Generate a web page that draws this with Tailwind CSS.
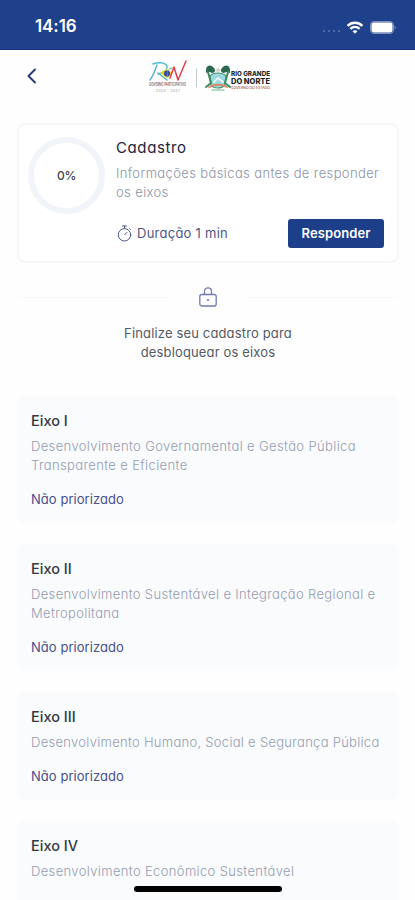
<!DOCTYPE html>
<html lang="pt-BR">
<head>
    <meta charset="UTF-8">
    <meta name="viewport" content="width=device-width, initial-scale=1.0">
    <title>Cadastro</title>
    <script src="https://cdn.jsdelivr.net/npm/@tailwindcss/browser@4"></script>
</head>
<body class="bg-white">
    <div class="relative h-[900px] w-[415px] overflow-hidden bg-[#fefefe] font-['Inter',sans-serif] [font-feature-settings:'cv11','cv08'_0,'calt'_0] whitespace-nowrap">
        <!-- Status bar -->
        <header class="flex h-[50px] items-center justify-between border-b border-[#17317b] bg-[#1f408b] pt-[5px] pr-[19px] pl-[35px] text-white">
            <span class="text-[17px] font-semibold tracking-[-0.1px]">14:16</span>
            <div class="flex items-center">
                <div class="mt-2 mr-[6px] flex gap-[3px]">
                    <span class="size-[2px] rounded-full bg-[#5f78b4]"></span>
                    <span class="size-[2px] rounded-full bg-[#5f78b4]"></span>
                    <span class="size-[2px] rounded-full bg-[#5f78b4]"></span>
                    <span class="size-[2px] rounded-full bg-[#5f78b4]"></span>
                </div>
                <svg class="mr-[6px] h-[13px] w-[18px]" viewBox="0 0 18 14" fill="none" stroke="white" stroke-width="2.6">
                    <path d="M1 5.2C5.6 .8 12.4 .8 17 5.2" />
                    <path d="M4 8.4c3-2.8 7-2.8 10 0" />
                    <path d="M9 13.6 6.3 10.9c1.6-1.3 3.8-1.3 5.4 0z" fill="white" stroke="none" />
                </svg>
                <svg class="h-[13px] w-[26px]" viewBox="0 0 26 13">
                    <rect x=".6" y=".6" width="22.8" height="11.8" rx="3.6" fill="none" stroke="#7e91c1" stroke-width="1.2" />
                    <rect x="1.5" y="1.5" width="21" height="10" rx="2.4" fill="white" />
                    <path d="M24.6 4.4c1.5.7 1.5 3.5 0 4.2z" fill="#7e91c1" />
                </svg>
            </div>
        </header>

        <!-- Navigation -->
        <nav class="grid h-[73px] grid-cols-[148px_auto] items-start">
            <svg class="mt-[18px] ml-[27px] h-4 w-[10px]" viewBox="0 0 10 16" fill="none" stroke="#27377f" stroke-width="1.9" stroke-linecap="round" stroke-linejoin="round">
                <path d="M8 1.5 1.5 8 8 14.5" />
            </svg>
            <div class="mt-[9px] flex">
                <svg class="h-[36px] w-[124px]" viewBox="0 0 124 36" fill="none" stroke-linecap="round">
                    <path d="M5 5c5-2 12-2 14 2 1 4-4 7-9 8" stroke="#4cbcd9" stroke-width="1.4" />
                    <path d="M9 6C7 12 5 17 2 21" stroke="#5aaed4" stroke-width="1.4" />
                    <path d="m10 14 9 7" stroke="#50b6bd" stroke-width="1.4" />
                    <path d="m12 14 6-4 7 4-6 5z" fill="#e9cf33" />
                    <circle cx="19" cy="14.5" r="3" fill="#31479a" />
                    <path d="m22 19 4-11 4 13 8-19" stroke="#e73d4c" stroke-width="1.5" stroke-linejoin="round" />
                    <path d="M20 18c-2-5 0-8 4-9" stroke="#49a36a" />
                    <path d="M48.5 10v18" stroke="#c9cbd0" stroke-width="1" />
                    <path d="M62 17c3-4 12-4 16 0l-1 9c-4 4-11 4-14 0z" fill="#9ed8df" stroke="#4f916e" stroke-width="1.2" />
                    <path d="M58 11c0-5 5-6 8-2 2 2 1 5-2 5-3-2-5 0-6 0zM82 11c0-5-5-6-8-2-2 2-1 5 2 5 3-2 5 0 6 0z" fill="#2d6952" />
                    <path d="m60 13 3 11-5 4m22-15-3 11 5 4" stroke="#3c8c61" stroke-width="2" />
                    <path d="m70 8 1 2 2 .2-1.5 1.4.5 2.2-2-1.2-2 1.2.5-2.2-1.5-1.4 2-.2z" fill="#c9d7c3" />
                    <path d="m66 23 4-4 5 4" stroke="#fff" stroke-width="1.5" />
                    <path d="M61 28c6-3 12-3 18 0" stroke="#dc8767" stroke-width="1.8" />
                    <path d="M64 31h12" stroke="#6ab985" stroke-width="1.2" />
                    <text x="1" y="27" textLength="37" lengthAdjust="spacingAndGlyphs" font-size="4.5" font-weight="600" fill="#85645f">GOVERNO PARTICIPATIVO</text>
                    <text x="8" y="32.5" textLength="24" font-size="3.5" fill="#9b9ba1">2024 - 2027</text>
                    <text x="83" y="16.5" textLength="39" lengthAdjust="spacingAndGlyphs" font-size="6.5" font-weight="800" fill="#262626">RIO GRANDE</text>
                    <text x="83" y="25" textLength="39" lengthAdjust="spacingAndGlyphs" font-size="7.5" font-weight="800" fill="#202020">DO NORTE</text>
                    <text x="83" y="29.5" textLength="39" lengthAdjust="spacingAndGlyphs" font-size="3" font-weight="600" fill="#b06857">GOVERNO DO ESTADO</text>
                </svg>
            </div>
        </nav>

        <main class="pr-4 pl-[17px]">
            <!-- Cadastro -->
            <section class="flex h-[140px] rounded-lg border-2 border-[#f5f7f9] bg-white pt-[12px] pr-[13px] pl-[9px]">
                <div class="flex size-[77px] shrink-0 items-center justify-center rounded-full border-[6px] border-[#f1f5f9]">
                    <span class="text-[12px] font-medium tracking-[-0.3px] text-[#42444b]">0%</span>
                </div>
                <div class="ml-[11px] flex-1">
                    <h1 class="text-[15px] leading-[22px] tracking-[0.6px] text-[#20233c]">Cadastro</h1>
                    <p class="mt-[5px] text-[13px] leading-[19px] font-light tracking-[0.38px] text-[#8d93a5]">Informações básicas antes de responder<br>os eixos</p>
                    <div class="mt-[17px] flex h-[29px] items-center">
                        <svg class="mr-[5px] ml-[1px] h-[17px] w-[15px]" viewBox="0 0 15 17" fill="none" stroke="#4a5592" stroke-linecap="round">
                            <circle cx="7.5" cy="9.8" r="6.2" />
                            <path d="M5.5 1h4M7.5 9.8l2.4-2.4M7.5 1.2v2M12.6 3.6l.8.8" />
                        </svg>
                        <span class="text-[13px] tracking-[0.25px] text-[#4f5685]">Duração 1 min</span>
                        <button class="ml-auto h-[29px] w-[96px] rounded-[3px] bg-[#1d3f89] text-[13px] font-semibold tracking-[0.1px] text-white">Responder</button>
                    </div>
                </div>
            </section>

            <!-- Locked axes notice -->
            <section class="h-[133px] pt-[24px]">
                <div class="flex items-center gap-[30px]">
                    <span class="h-px flex-1 bg-[#f8f9fb]"></span>
                    <svg class="h-[20px] w-[18px]" viewBox="0 0 18 20" fill="none" stroke="#7279b3" stroke-width="1.3" stroke-linecap="round">
                        <rect x=".8" y="7.5" width="16.4" height="11.5" rx="2" />
                        <path d="M5.5 7.5V4.6c0-5 7-5 7 0v2.9M8.3 13h1.4" />
                    </svg>
                    <span class="h-px flex-1 bg-[#f8f9fb]"></span>
                </div>
                <p class="mt-[17px] text-center text-[13px] leading-[19px] tracking-[0.15px] text-[#555963]">Finalize seu cadastro para<br>desbloquear os eixos</p>
            </section>

            <!-- Eixos -->
            <div class="flex flex-col gap-[21px]">
                <article class="rounded-lg bg-[#f9fbfd] p-[14px]">
                    <h2 class="text-[14.5px] leading-[22px] font-medium text-[#343843]">Eixo I</h2>
                    <p class="mt-[5px] text-[13px] leading-[19px] font-light tracking-[0.37px] text-[#969bb1]">Desenvolvimento Governamental e Gestão Pública<br>Transparente e Eficiente</p>
                    <p class="mt-[15px] text-[13px] leading-[19px] tracking-[0.05px] text-[#474f8c]">Não priorizado</p>
                </article>
                <article class="rounded-lg bg-[#f9fbfd] p-[14px]">
                    <h2 class="text-[14.5px] leading-[22px] font-medium text-[#343843]">Eixo II</h2>
                    <p class="mt-[5px] text-[13px] leading-[19px] font-light tracking-[0.35px] text-[#969bb1]">Desenvolvimento Sustentável e Integração Regional e<br>Metropolitana</p>
                    <p class="mt-[15px] text-[13px] leading-[19px] tracking-[0.05px] text-[#474f8c]">Não priorizado</p>
                </article>
                <article class="rounded-lg bg-[#f9fbfd] p-[14px]">
                    <h2 class="text-[14.5px] leading-[22px] font-medium text-[#343843]">Eixo III</h2>
                    <p class="mt-[5px] text-[13px] leading-[19px] font-light tracking-[0.29px] text-[#969bb1]">Desenvolvimento Humano, Social e Segurança Pública</p>
                    <p class="mt-[15px] text-[13px] leading-[19px] tracking-[0.05px] text-[#474f8c]">Não priorizado</p>
                </article>
                <article class="h-[108px] rounded-lg bg-[#f9fbfd] p-[14px]">
                    <h2 class="text-[14.5px] leading-[22px] font-medium text-[#343843]">Eixo IV</h2>
                    <p class="mt-[5px] text-[13px] leading-[19px] font-light tracking-[0.36px] text-[#969bb1]">Desenvolvimento Econômico Sustentável</p>
                </article>
            </div>
        </main>

        <!-- Home indicator -->
        <div class="absolute top-[886px] left-[134px] h-[6px] w-[148px] rounded-full bg-black"></div>
    </div>
</body>
</html>
